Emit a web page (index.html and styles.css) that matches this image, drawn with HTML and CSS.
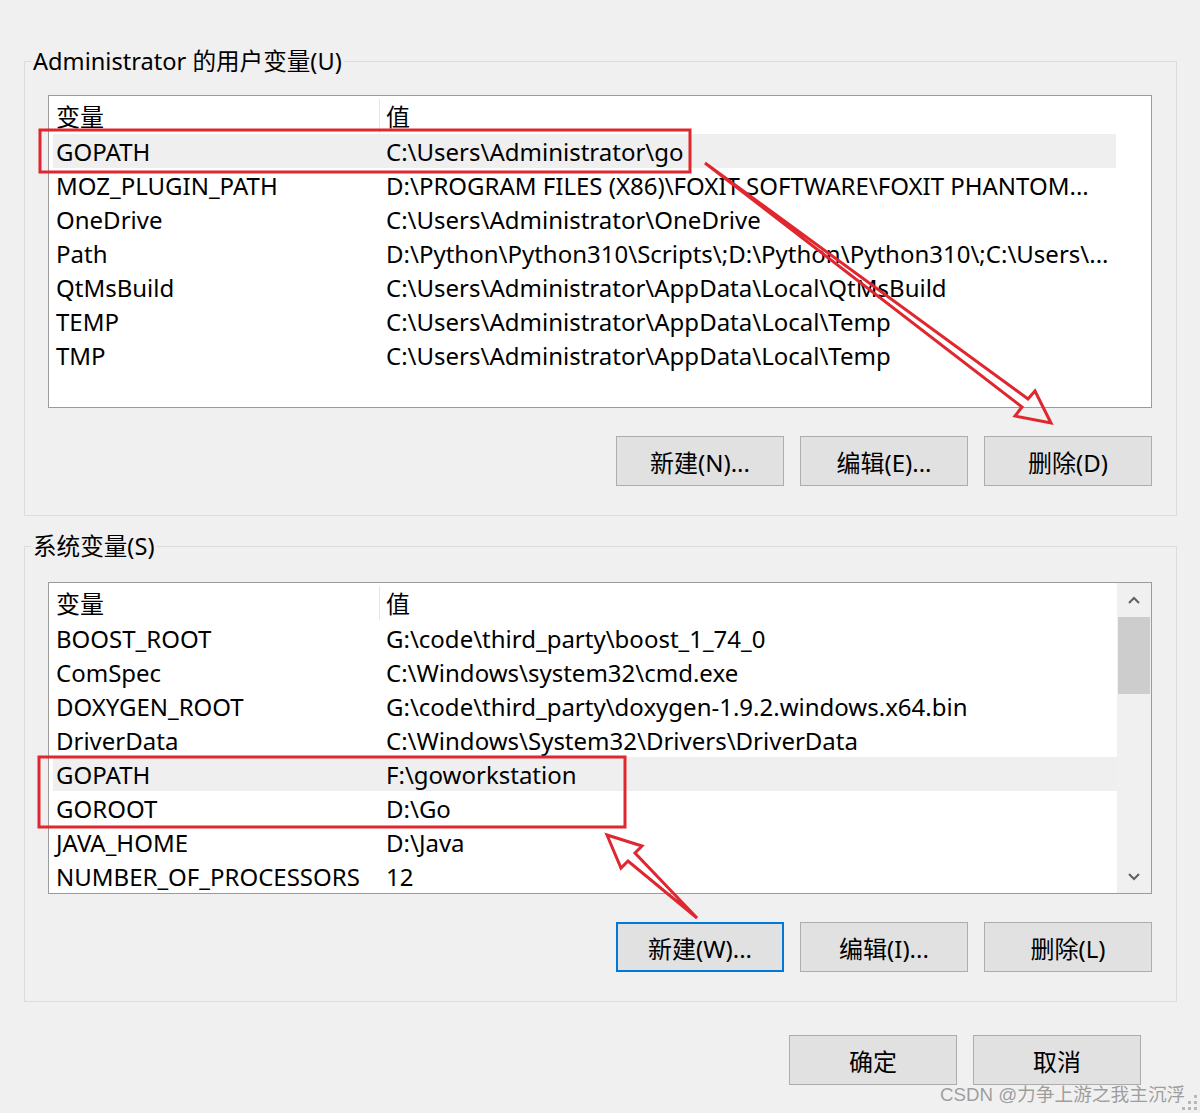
FILE: index.html
```html
<!DOCTYPE html>
<html lang="zh-CN">
<head>
    <meta charset="UTF-8">
    <meta name="viewport" content="width=device-width, initial-scale=1.0">
    <title>环境变量</title>
    <link rel="stylesheet" href="styles.css">
</head>
<body>
    <div class="dialog">
        <!-- 用户变量 -->
        <fieldset class="group">
            <legend>Administrator 的用户变量(U)</legend>
            <div class="list">
                <div class="list-body no-scroll">
                    <div class="row head"><span>变量</span><span>值</span></div>
                    <div class="row hot"><span>GOPATH</span><span>C:\Users\Administrator\go</span></div>
                    <div class="row"><span>MOZ_PLUGIN_PATH</span><span>D:\PROGRAM FILES (X86)\FOXIT SOFTWARE\FOXIT PHANTOM...</span></div>
                    <div class="row"><span>OneDrive</span><span>C:\Users\Administrator\OneDrive</span></div>
                    <div class="row"><span>Path</span><span>D:\Python\Python310\Scripts\;D:\Python\Python310\;C:\Users\...</span></div>
                    <div class="row"><span>QtMsBuild</span><span>C:\Users\Administrator\AppData\Local\QtMsBuild</span></div>
                    <div class="row"><span>TEMP</span><span>C:\Users\Administrator\AppData\Local\Temp</span></div>
                    <div class="row"><span>TMP</span><span>C:\Users\Administrator\AppData\Local\Temp</span></div>
                </div>
            </div>
            <div class="btns">
                <button>新建(N)...</button>
                <button>编辑(E)...</button>
                <button>删除(D)</button>
            </div>
        </fieldset>

        <!-- 系统变量 -->
        <fieldset class="group sys">
            <legend>系统变量(S)</legend>
            <div class="list">
                <div class="list-body">
                    <div class="row head"><span>变量</span><span>值</span></div>
                    <div class="row"><span>BOOST_ROOT</span><span>G:\code\third_party\boost_1_74_0</span></div>
                    <div class="row"><span>ComSpec</span><span>C:\Windows\system32\cmd.exe</span></div>
                    <div class="row"><span>DOXYGEN_ROOT</span><span>G:\code\third_party\doxygen-1.9.2.windows.x64.bin</span></div>
                    <div class="row"><span>DriverData</span><span>C:\Windows\System32\Drivers\DriverData</span></div>
                    <div class="row hot"><span>GOPATH</span><span>F:\goworkstation</span></div>
                    <div class="row"><span>GOROOT</span><span>D:\Go</span></div>
                    <div class="row"><span>JAVA_HOME</span><span>D:\Java</span></div>
                    <div class="row"><span>NUMBER_OF_PROCESSORS</span><span>12</span></div>
                </div>
                <div class="scrollbar">
                    <div class="sb-btn">
                        <svg width="14" height="9" viewBox="0 0 14 9"><polyline points="2,7 7,2 12,7" /></svg>
                    </div>
                    <div class="sb-track"><div class="sb-thumb"></div></div>
                    <div class="sb-btn">
                        <svg width="14" height="9" viewBox="0 0 14 9"><polyline points="2,2 7,7 12,2" /></svg>
                    </div>
                </div>
            </div>
            <div class="btns">
                <button class="focus">新建(W)...</button>
                <button>编辑(I)...</button>
                <button>删除(L)</button>
            </div>
        </fieldset>

        <div class="footer">
            <button>确定</button>
            <button>取消</button>
        </div>

        <div class="watermark">CSDN @力争上游之我主沉浮</div>

        <!-- 红色标注 -->
        <svg class="marks" width="1200" height="1113" viewBox="0 0 1200 1113">
            <rect x="40" y="130" width="650" height="42" />
            <rect x="39" y="757" width="586" height="70" />
            <polygon points="705,163 1028,399 1035,391 1051,423 1015,416 1022,407" />
            <polygon points="697,918 635,853 642,846 607,835 621,868 628,861" />
        </svg>
        <svg class="grip" width="16" height="16" viewBox="0 0 16 16">
            <rect x="12" y="1" width="3" height="3" />
            <rect x="6" y="7" width="3" height="3" />
            <rect x="12" y="7" width="3" height="3" />
            <rect x="0" y="13" width="3" height="3" />
            <rect x="6" y="13" width="3" height="3" />
            <rect x="12" y="13" width="3" height="3" />
        </svg>
    </div>
</body>
</html>
```

FILE: styles.css
```css
html, body{
    margin: 0;
    padding: 0;
    background: #f0f0f0;
}
body{
    font-family: "Noto Sans", "Noto Sans CJK SC", sans-serif;
    font-size: 24px;
    color: #000;
}
.dialog{
    position: relative;
    width: 1200px;
    height: 1113px;
    overflow: hidden;
}

/* 分组框 */
.group{
    box-sizing: border-box;
    width: 1153px;
    margin: 46px 0 0 24px;
    padding: 19px 24px 29px 23px;
    border: 1px solid #dcdcdc;
    min-width: 0;
}
.group.sys{
    margin-top: 15px;
    padding-top: 21px;
}
.group legend{
    margin-left: -17px;
    padding: 0 2px;
    font-size: 23.6px;
    line-height: 30px;
}

/* 列表 */
.list{
    box-sizing: border-box;
    display: flex;
    width: 1104px;
    height: 313px;
    border: 1px solid #9b9b9b;
    background: #fff;
    overflow: hidden;
}
.sys .list{
    height: 312px;
}
.list-body{
    flex: 1;
    min-width: 0;
    padding-left: 4px;
}
.list-body.no-scroll{
    padding-right: 35px;
}
.row{
    display: grid;
    grid-template-columns: 327px 1fr;
    height: 34px;
    line-height: 35px;
}
.row span{
    white-space: nowrap;
    overflow: hidden;
    text-overflow: ellipsis;
    padding-left: 3px;
}
.row span + span{
    padding-left: 6px;
}
.row.head{
    height: 38px;
}
.row.head span{
    margin-top: 3px;
    height: 34px;
}
.row.head span:first-child{
    box-sizing: border-box;
    border-right: 1px solid #e5e5e5;
}
.row.hot{
    background: #efefef;
}

/* 滚动条 */
.scrollbar{
    display: flex;
    flex-direction: column;
    width: 34px;
    background: #f0f0f0;
}
.sb-btn{
    display: flex;
    align-items: center;
    justify-content: center;
    height: 34px;
}
.sb-btn polyline{
    fill: none;
    stroke: #606060;
    stroke-width: 2;
}
.sb-track{
    flex: 1;
}
.sb-thumb{
    height: 77px;
    margin: 0 1px;
    background: #cdcdcd;
}

/* 按钮 */
.btns{
    display: flex;
    justify-content: flex-end;
    gap: 16px;
    margin-top: 28px;
}
button{
    box-sizing: border-box;
    width: 168px;
    height: 50px;
    padding: 0;
    border: 1px solid #adadad;
    background: #e1e1e1;
    font-family: inherit;
    font-size: 24px;
    color: #000;
    outline: none;
}
button.focus{
    border: 2px solid #0078d7;
}
.footer{
    display: flex;
    justify-content: flex-end;
    gap: 16px;
    margin-top: 33px;
    padding-right: 59px;
}

/* 水印与标注 */
.watermark{
    position: absolute;
    left: 940px;
    top: 1082px;
    font-family: "Liberation Sans", "Noto Sans CJK SC", sans-serif;
    font-size: 18.7px;
    line-height: 26px;
    color: rgba(120, 120, 120, 0.7);
    white-space: nowrap;
}
.marks{
    position: absolute;
    left: 0;
    top: 0;
    pointer-events: none;
}
.marks rect, .marks polygon{
    fill: none;
    stroke: #e0262e;
    stroke-width: 3;
    stroke-linejoin: miter;
}
.grip{
    position: absolute;
    left: 1182px;
    top: 1094px;
}
.grip rect{
    fill: #b8b8b8;
}
```
